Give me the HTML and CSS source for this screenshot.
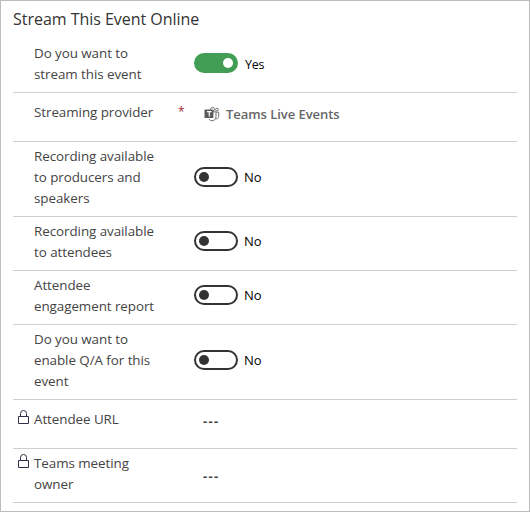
FILE: index.html
```html
<!DOCTYPE html>
<html lang="en">
<head>
<meta charset="utf-8">
<title>Stream This Event Online</title>
<link rel="stylesheet" href="styles.css">
</head>
<body>
<main class="panel">
  <h2 class="title">Stream This Event Online</h2>
  <div class="row">
    <span class="lock"></span>
    <div class="label">Do you want to<br>stream this event</div>
    <div class="field on"><span class="toggle"><i class="knob"></i></span><span class="state">Yes</span></div>
  </div>
  <div class="row single">
    <span class="lock"></span>
    <div class="label">Streaming provider</div>
    <span class="required">*</span>
    <div class="field lookup">
      <svg class="teams" viewBox="0 0 16 16" width="16" height="16">
        <g fill="none" stroke="#777" stroke-width="1">
          <circle cx="8.6" cy="3.2" r="1.9"/>
          <circle cx="13" cy="3.6" r="1.4"/>
          <path d="M9 5.8h3v5.2a3.9 3.9 0 0 1-7.2 2M12 6.2h2.7v4.3a2.3 2.3 0 0 1-2.9 2.2"/>
        </g>
        <rect x=".5" y="3.5" width="8.9" height="8.6" rx=".6" fill="#5c5c5c"/>
        <path d="M3 5.7h4.6M5.3 5.7v4.7" stroke="#fff" stroke-width="1.2"/>
      </svg>
      <span class="link">Teams Live Events</span>
    </div>
  </div>
  <div class="row">
    <span class="lock"></span>
    <div class="label">Recording available<br>to producers and<br>speakers</div>
    <div class="field"><span class="toggle"><i class="knob"></i></span><span class="state">No</span></div>
  </div>
  <div class="row">
    <span class="lock"></span>
    <div class="label">Recording available<br>to attendees</div>
    <div class="field"><span class="toggle"><i class="knob"></i></span><span class="state">No</span></div>
  </div>
  <div class="row">
    <span class="lock"></span>
    <div class="label">Attendee<br>engagement report</div>
    <div class="field"><span class="toggle"><i class="knob"></i></span><span class="state">No</span></div>
  </div>
  <div class="row">
    <span class="lock"></span>
    <div class="label">Do you want to<br>enable Q/A for this<br>event</div>
    <div class="field"><span class="toggle"><i class="knob"></i></span><span class="state">No</span></div>
  </div>
  <div class="row single">
    <span class="lock"><svg viewBox="0 0 12 15" width="12" height="15"><path d="M.5 6.5h10v7H.5zM2.5 6.5V3.4a3 2.9 0 0 1 6 0v3.1" fill="none" stroke="#33304a"/></svg></span>
    <div class="label">Attendee URL</div>
    <div class="field empty">---</div>
  </div>
  <div class="row">
    <span class="lock"><svg viewBox="0 0 12 15" width="12" height="15"><path d="M.5 6.5h10v7H.5zM2.5 6.5V3.4a3 2.9 0 0 1 6 0v3.1" fill="none" stroke="#33304a"/></svg></span>
    <div class="label">Teams meeting<br>owner</div>
    <div class="field empty">---</div>
  </div>
</main>
</body>
</html>
```

FILE: styles.css
```css
* { box-sizing: border-box; }
body { margin: 0; background: #fff; font-family: "Open Sans", "Noto Sans", sans-serif; font-size: 13px; color: #444; }
.panel { height: 512px; border: 1px solid #bdbdbd; padding: 0 12px; }
.title { margin: 0; height: 38px; padding-top: 7px; font-size: 16px; line-height: 22px; font-weight: 400; letter-spacing: -.03px; color: #333; }
.row { display: grid; grid-template-columns: 21px 144px 16px 1fr; border-bottom: 1px solid #cecece; padding: 4px 0 7px; }
.single { height: 49px; padding: 8px 0 0; align-items: start; }
.lock { grid-column: 1; padding: 1px 0 0 5px; height: 16px; line-height: 0; }
.single .lock { padding-top: 2px; }
.label { grid-column: 2; font-size: 13.4px; line-height: 21px; letter-spacing: -.06px; white-space: nowrap; }
.single .label { padding-top: 1px; }
.required { grid-column: 3; color: #a4262c; font-size: 12px; line-height: 21px; }
.field { grid-column: 4; display: flex; align-items: center; line-height: 20px; margin-top: -2px; }
.single .field { margin-top: 0; }
.toggle { display: flex; align-items: center; width: 44px; height: 20px; padding: 0 3px; border: 2px solid #333; border-radius: 10px; }
.knob { width: 10px; height: 10px; border-radius: 50%; background: #333; }
.on .toggle { justify-content: flex-end; background: #429e54; border-color: #429e54; }
.on .knob { background: #fff; }
.state { margin-left: 6px; color: #000; }
.on .state { margin-left: 7px; padding-top: 3px; font-size: 12.5px; letter-spacing: -.3px; }
.lookup { padding-left: 10px; padding-top: 3px; }
.link { margin-left: 6px; color: #666; font-weight: 600; letter-spacing: -.05px; }
.single .empty { padding-top: 3px; }
.empty { padding: 6px 0 0 9px; font-weight: 700; letter-spacing: 1.3px; }
```
